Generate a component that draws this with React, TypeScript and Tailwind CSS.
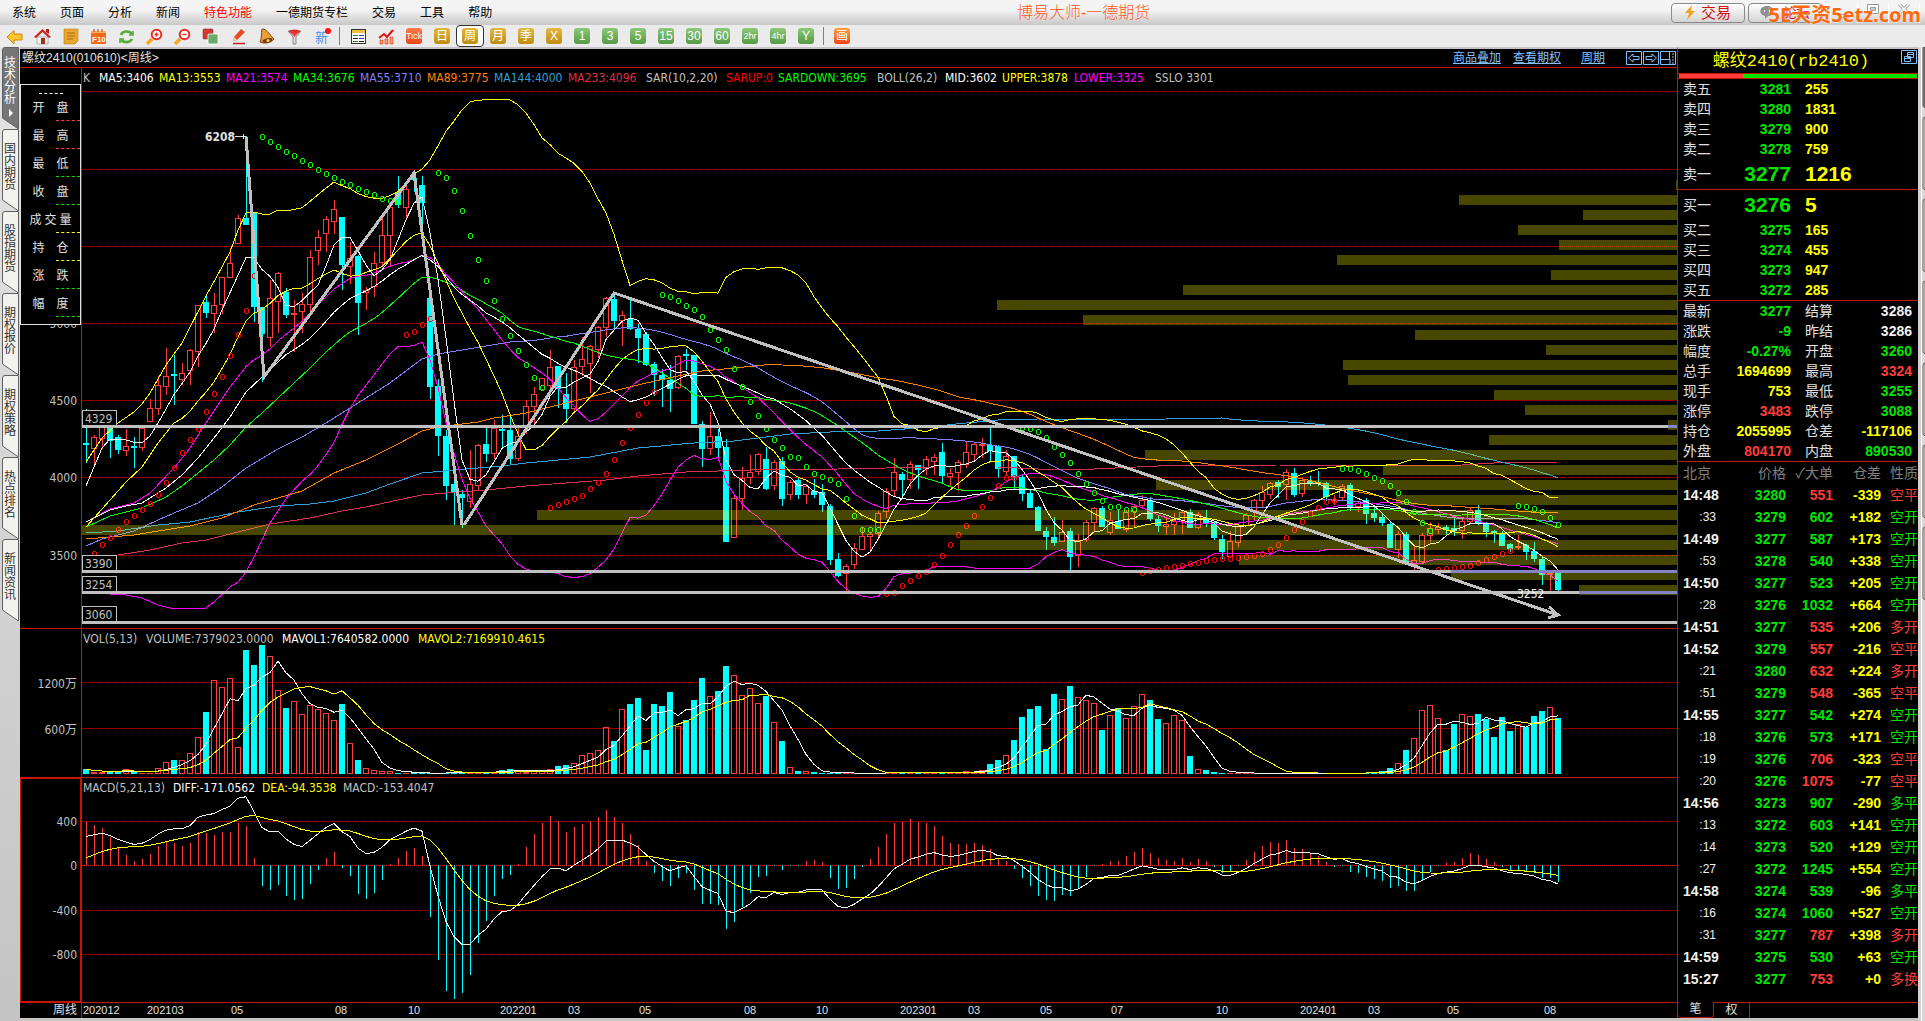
import type { ReactNode } from 'react';
import clsx from 'clsx';

type Pt = [number, number];

// One bar per week: direction (1 = up), high, body top, body bottom, low, volume top.
const BARS: number[][] = [
  [0, 409, 443, 445, 463, 769], [1, 435, 437, 449, 467, 772], [1, 420, 426, 439, 449, 772], [0, 425, 427, 441, 458, 772],
  [0, 435, 437, 450, 454, 771], [1, 429, 446, 451, 456, 769], [0, 437, 446, 448, 468, 772], [1, 425, 428, 448, 451, 773],
  [1, 399, 408, 422, 422, 773], [1, 376, 385, 409, 415, 768], [1, 348, 376, 387, 395, 762], [0, 355, 374, 376, 405, 760],
  [1, 363, 373, 380, 385, 760], [1, 349, 350, 371, 385, 753], [1, 305, 305, 352, 367, 737], [0, 295, 302, 313, 318, 712],
  [1, 293, 305, 314, 333, 680], [1, 277, 277, 305, 314, 687], [1, 248, 263, 278, 278, 678], [1, 215, 218, 244, 244, 747],
  [0, 136, 218, 225, 225, 650], [0, 213, 213, 307, 322, 665], [0, 307, 307, 334, 382, 645], [1, 280, 298, 338, 347, 656],
  [1, 272, 273, 302, 333, 690], [0, 288, 292, 315, 318, 708], [1, 300, 313, 315, 352, 701], [1, 293, 304, 312, 333, 714],
  [1, 250, 257, 305, 313, 705], [1, 230, 237, 251, 265, 709], [1, 216, 219, 234, 252, 713], [1, 200, 209, 222, 234, 720],
  [0, 217, 217, 265, 290, 704], [1, 242, 258, 267, 284, 743], [0, 255, 256, 303, 335, 760], [1, 287, 290, 293, 310, 768],
  [1, 252, 263, 287, 297, 770], [1, 213, 235, 263, 267, 771], [1, 205, 207, 236, 267, 771], [0, 176, 192, 205, 208, 773],
  [1, 182, 189, 208, 220, 773], [0, 170, 178, 180, 192, 773], [0, 176, 185, 203, 235, 773], [0, 298, 298, 387, 399, 773],
  [0, 379, 386, 436, 456, 773], [0, 430, 436, 486, 500, 773], [0, 475, 484, 493, 525, 772], [0, 490, 494, 498, 528, 773],
  [1, 450, 484, 502, 508, 772], [1, 444, 445, 486, 490, 772], [0, 428, 444, 454, 462, 772], [1, 420, 428, 454, 459, 772],
  [0, 415, 429, 431, 447, 770], [0, 414, 430, 459, 465, 769], [1, 427, 436, 459, 461, 771], [1, 400, 406, 427, 434, 772],
  [1, 387, 394, 407, 427, 771], [1, 378, 378, 390, 390, 771], [1, 350, 367, 386, 390, 769], [0, 366, 366, 389, 408, 766],
  [0, 373, 394, 409, 423, 765], [1, 360, 367, 409, 411, 763], [1, 337, 359, 367, 376, 755], [1, 345, 346, 364, 393, 753],
  [1, 326, 327, 350, 358, 750], [1, 297, 298, 328, 337, 727], [0, 294, 299, 321, 328, 741], [1, 311, 315, 321, 346, 709],
  [0, 300, 319, 329, 330, 704], [0, 324, 329, 338, 363, 698], [0, 332, 334, 365, 366, 750], [0, 362, 364, 375, 396, 704],
  [0, 369, 375, 380, 407, 706], [0, 365, 380, 389, 412, 692], [1, 355, 356, 388, 389, 726], [0, 349, 354, 356, 370, 720],
  [0, 355, 355, 424, 424, 700], [0, 421, 424, 449, 467, 678], [1, 412, 436, 449, 455, 696], [0, 429, 436, 448, 460, 691],
  [0, 439, 447, 542, 542, 666], [1, 495, 498, 538, 538, 675], [1, 467, 478, 499, 510, 695], [1, 455, 472, 478, 484, 688],
  [1, 453, 454, 472, 475, 703], [0, 447, 459, 489, 490, 696], [1, 460, 462, 486, 490, 722], [0, 457, 461, 499, 506, 741],
  [1, 480, 482, 495, 500, 767], [0, 477, 480, 495, 499, 771], [1, 484, 486, 495, 504, 771], [0, 479, 491, 495, 498, 772],
  [0, 484, 492, 505, 512, 773], [0, 504, 506, 560, 565, 773], [0, 553, 559, 576, 577, 773], [1, 564, 566, 574, 591, 773],
  [1, 543, 548, 565, 569, 773], [1, 527, 536, 550, 550, 773], [1, 533, 534, 537, 552, 773], [1, 511, 513, 534, 540, 773],
  [1, 488, 491, 512, 518, 773], [1, 458, 472, 491, 496, 772], [0, 472, 474, 480, 496, 773], [1, 461, 464, 480, 489, 773],
  [0, 465, 465, 470, 489, 773], [1, 456, 459, 469, 475, 773], [1, 454, 457, 462, 475, 773], [0, 443, 452, 476, 484, 772],
  [1, 468, 473, 477, 486, 772], [1, 460, 462, 473, 491, 773], [1, 442, 452, 465, 468, 771], [1, 442, 444, 455, 461, 772],
  [1, 438, 444, 446, 458, 770], [0, 427, 445, 451, 462, 764], [0, 445, 446, 469, 478, 760], [1, 450, 456, 472, 475, 755],
  [0, 456, 456, 477, 489, 740], [0, 474, 477, 494, 501, 717], [0, 489, 493, 508, 508, 709], [0, 506, 507, 531, 531, 706],
  [0, 527, 531, 537, 550, 749], [0, 517, 537, 543, 546, 694], [1, 520, 532, 542, 542, 699], [0, 528, 531, 557, 573, 686],
  [1, 534, 540, 556, 567, 697], [1, 520, 522, 540, 542, 700], [1, 507, 508, 523, 532, 703], [0, 506, 508, 527, 527, 730],
  [1, 512, 520, 533, 535, 715], [0, 509, 521, 529, 529, 708], [1, 510, 512, 530, 532, 718], [1, 504, 506, 512, 528, 706],
  [1, 495, 500, 506, 509, 694], [0, 497, 500, 519, 521, 700], [0, 516, 519, 526, 532, 719], [1, 518, 524, 527, 535, 723],
  [1, 513, 521, 525, 535, 715], [1, 510, 512, 522, 534, 720], [0, 509, 512, 528, 528, 756], [1, 512, 514, 528, 529, 769],
  [0, 510, 518, 523, 527, 770], [0, 522, 522, 538, 540, 772], [0, 535, 539, 552, 559, 773], [1, 531, 541, 557, 558, 773],
  [1, 524, 526, 543, 547, 773], [1, 513, 515, 526, 526, 773], [1, 499, 500, 512, 520, 773], [1, 486, 492, 501, 507, 773],
  [1, 482, 483, 495, 499, 773], [0, 480, 482, 487, 498, 773], [1, 469, 472, 485, 500, 773], [0, 468, 473, 495, 497, 773],
  [1, 477, 480, 494, 497, 773], [0, 476, 481, 484, 486, 773], [0, 471, 482, 484, 486, 773], [0, 482, 483, 497, 501, 773],
  [1, 495, 499, 501, 505, 773], [1, 484, 486, 498, 500, 773], [0, 483, 485, 507, 511, 773], [1, 501, 503, 507, 512, 773],
  [0, 498, 500, 514, 524, 773], [0, 507, 513, 518, 522, 772], [0, 514, 517, 523, 526, 771], [0, 521, 524, 548, 548, 768],
  [1, 531, 534, 550, 558, 763], [0, 532, 534, 563, 564, 750], [1, 546, 560, 565, 570, 738], [1, 533, 535, 562, 564, 710],
  [1, 522, 528, 536, 542, 705], [1, 523, 527, 530, 534, 718], [0, 525, 527, 530, 535, 750], [0, 517, 528, 531, 536, 724],
  [1, 519, 521, 531, 539, 714], [1, 507, 510, 522, 524, 716], [0, 505, 510, 523, 525, 714], [0, 522, 523, 532, 537, 719],
  [0, 530, 531, 533, 543, 737], [0, 531, 533, 546, 546, 717], [0, 543, 544, 549, 552, 731], [1, 535, 546, 548, 550, 724],
  [0, 544, 545, 552, 560, 727], [0, 542, 551, 559, 562, 716], [0, 557, 559, 575, 585, 711], [1, 573, 573, 575, 592, 707],
  [0, 570, 573, 590, 594, 718],
];

const LEFT = 82;
const barX = (n: number) => 86 + 8 * n;
const closes = BARS.map((b) => (b[0] ? b[2] : b[3]));
const vols = BARS.map((b) => b[5]);

const lerp = (pts: Pt[], n: number) => {
  const i = pts.findIndex((p) => p[0] >= n);
  if (i < 0) return pts[pts.length - 1][1];
  if (i === 0) return pts[0][1];
  const [a, b] = [pts[i - 1], pts[i]];
  return a[1] + ((b[1] - a[1]) * (n - a[0])) / (b[0] - a[0]);
};

// Moving average; `head` holds the values from before the first full window.
const ma = (src: number[], period: number, head: Pt[] = []): Pt[] =>
  src.map((_, n): Pt => {
    if (n < period - 1 && head.length) return [n, lerp(head, n)];
    const win = src.slice(Math.max(0, n - period + 1), n + 1);
    return [n, win.reduce((s, v) => s + v, 0) / win.length];
  });

const boll = (sign: number, head: Pt[]): Pt[] =>
  closes.map((_, n): Pt => {
    if (n < 25) return [n, lerp(head, n)];
    const win = closes.slice(n - 25, n + 1);
    const mid = win.reduce((s, v) => s + v, 0) / 26;
    const sd = Math.sqrt(win.reduce((s, v) => s + (v - mid) ** 2, 0) / 26);
    return [n, mid + sign * 2 * sd];
  });

const path = (pts: Pt[]) => pts.map(([n, y]) => `${barX(n)},${y.toFixed(1)}`).join(' ');

const HEAD5: Pt[] = [[0, 486], [1, 467], [2, 448], [3, 439]];
const HEAD13: Pt[] = [[0, 527], [3, 500], [5, 482], [7, 467], [9, 443], [11, 423]];
const HEAD21: Pt[] = [[0, 522], [3, 509], [6, 503], [8, 493], [11, 468], [13, 448], [15, 423], [18, 387], [19, 377]];
const HEAD_MID: Pt[] = [[0, 522], [3, 510], [5, 506], [7, 503], [10, 488], [12, 475], [14, 458], [16, 438], [18, 417], [20, 392], [22, 377], [24, 362]];
const HEAD34: Pt[] = [[0, 527], [3, 516], [7, 508], [10, 497], [12, 486], [14, 473], [16, 460], [18, 445], [20, 427], [22, 413], [24, 398], [26, 383], [28, 368], [30, 352], [32, 338]];
const HEAD55: Pt[] = [[0, 546], [2, 539], [6, 531], [9, 520], [11, 513], [14, 503], [17, 487], [20, 468], [24, 449], [27, 437], [30, 423], [34, 403], [38, 383], [42, 359], [44, 354], [47, 350], [50, 346], [53, 342]];
const HEAD89: Pt[] = [[0, 539], [6, 535], [9, 531], [13, 526], [17, 518], [21, 505], [24, 498], [27, 491], [31, 473], [35, 460], [39, 444], [42, 431], [44, 427], [49, 422], [51, 418], [55, 413], [59, 405], [65, 393], [70, 383], [74, 376], [77, 371], [81, 368], [86, 364], [87, 365]];
const HEAD144: Pt[] = [[0, 533], [4, 531], [9, 525], [13, 522], [19, 512], [24, 506], [28, 504], [31, 501], [35, 493], [38, 484], [42, 473], [46, 470], [52, 466], [55, 463], [63, 457], [69, 448], [76, 443], [81, 441], [88, 434], [93, 432], [99, 431], [104, 428], [110, 423], [114, 420], [119, 419], [129, 420], [135, 419], [142, 418]];
const MA233: Pt[] = [[4, 555], [8, 550], [12, 543], [15, 540], [18, 534], [23, 524], [28, 518], [32, 511], [35, 507], [39, 500], [42, 495], [45, 493], [50, 490], [55, 486], [65, 480], [69, 476], [75, 472], [83, 470], [94, 469], [106, 467], [114, 467], [119, 469], [126, 469], [134, 466], [149, 465], [164, 466], [172, 465], [176, 463], [184, 462]];
const HEAD_UP: Pt[] = [[0, 462], [2, 438], [4, 423], [6, 412], [7, 404], [8, 393], [10, 365], [12, 343], [15, 296], [17, 267], [18, 252], [19, 230], [20, 213], [21, 212], [22, 214], [23, 214], [24, 210]];
const HEAD_LOW: Pt[] = [[2, 592], [3, 594], [5, 595], [7, 598], [9, 605], [11, 609], [13, 608], [14, 609], [15, 608], [16, 602], [18, 587], [19, 582], [20, 572], [21, 557], [22, 540], [23, 523], [24, 511]];

const LINES: { color: string; pts: Pt[] }[] = [
  { color: '#dc3050', pts: MA233 },
  { color: '#30a0d8', pts: ma(closes, 144, HEAD144) },
  { color: '#ff8000', pts: ma(closes, 89, HEAD89) },
  { color: '#8080ff', pts: ma(closes, 55, HEAD55) },
  { color: '#00ff00', pts: ma(closes, 34, HEAD34) },
  { color: '#ff00ff', pts: ma(closes, 21, HEAD21) },
  { color: '#ffffff', pts: ma(closes, 26, HEAD_MID) },
  { color: '#ffff00', pts: ma(closes, 13, HEAD13) },
  { color: '#ffff00', pts: boll(-1, HEAD_UP) },
  { color: '#ff00ff', pts: boll(1, HEAD_LOW).slice(2) },
  { color: '#f0f0f0', pts: ma(closes, 5, HEAD5) },
];

// Parabolic SAR runs: first bar, up trend (red) or not (green), rows
const SAR: [number, boolean, number[]][] = [
  [1, true, [553, 544, 537, 529, 521, 515, 509, 503, 494, 482, 467, 452, 439, 428, 411, 393, 376, 355, 334, 310, 275]],
  [22, false, [136, 141, 146, 151, 155, 160, 164, 169, 173, 177, 181, 184, 188, 191, 194, 198, 200, 201]],
  [40, true, [334, 331, 324, 318]],
  [44, false, [172, 177, 190, 210, 235, 259, 280, 300, 318, 335, 350, 364, 377, 387]],
  [58, true, [507, 504, 501, 498, 495, 488, 482, 473, 459, 442, 427, 414, 402, 391]],
  [72, false, [294, 296, 300, 305, 309, 316, 329, 339, 349, 368, 386, 401, 415, 428, 439, 447, 456, 457, 466, 473, 476, 479, 483, 498, 515, 529, 529, 529]],
  [100, true, [593, 592, 585, 580, 575, 571, 564, 555, 544, 534, 525, 515, 506, 497, 485, 477, 477]],
  [117, false, [427, 428, 431, 437, 446, 454, 462, 473, 483, 492, 500, 506, 506, 509, 509]],
  [132, true, [572, 570, 569, 567, 566, 565, 563, 562, 560, 559, 558, 558, 557, 556, 555, 553, 549, 544, 537, 529, 521, 513, 507, 501, 500]],
  [157, false, [468, 468, 470, 473, 477, 480, 485, 492, 501, 511, 522, 530]],
  [169, true, [569, 568, 567, 566, 565, 562, 559, 556, 553, 550]],
  [179, false, [505, 506, 508, 511, 517, 524]],
];

// Left ends of the volume-by-price bars, one per 15px step from y = 180
const PROFILE = [1676, 1459, 1583, 1518, 1559, 1337, 1551, 1183, 997, 1083, 1415, 1546, 1343, 1348, 1494, 1525, 1668, 1489, 1145, 1383, 1156, 1396, 537, 82, 960, 1239, 1451, 1579];

const LEVELS: [string, number][] = [['4329', 425], ['3390', 570], ['3254', 591], ['3060', 621]];

// MACD(5,21,13) on the closes, scaled to the pane's own axis
const ZERO = 865;
const macd = (() => {
  let fast = 460;
  let slow = 500;
  let dea = 7;
  return closes.map((c, n) => {
    if (n > 0) {
      fast += (c - fast) / 3;
      slow += (c - slow) / 11;
    }
    const diff = (slow - fast) * 0.7175;
    if (n > 0) dea += (diff - dea) / 7;
    return { diff, dea, hist: 2 * (diff - dea) };
  });
})();

const DATES: [string, number][] = [
  ['202012', 83], ['202103', 147], ['05', 231], ['08', 335], ['10', 408], ['202201', 500], ['03', 568], ['05', 639], ['08', 744],
  ['10', 816], ['202301', 900], ['03', 968], ['05', 1040], ['07', 1111], ['10', 1216], ['202401', 1300], ['03', 1368], ['05', 1447], ['08', 1544],
];

const tone = {
  g: 'text-[#00e600]',
  r: 'text-[#ff3c3c]',
  y: 'text-[#ffff00]',
  w: 'text-[#f0f0f0]',
};
type Tone = keyof typeof tone;

function Grid({ rows }: { rows: number[] }) {
  return (
    <g stroke="#a00000" strokeDasharray="1 1">
      {rows.map((y) => <line key={y} x1={LEFT} x2={4000} y1={y + 0.5} y2={y + 0.5} />)}
    </g>
  );
}

function Axis({ top, labels }: { top: number; labels: [string, number][] }) {
  return (
    <div className="w-[62px] shrink-0 border-r border-[#c81400]">
      <svg className="block h-full w-full" fill="#c0c0c0" fontSize="12" textAnchor="end">
        {labels.map(([t, y]) => <text key={t} x="57" y={y - top + 5}>{t}</text>)}
      </svg>
    </div>
  );
}

function PriceChart() {
  return (
    <svg className="block min-h-0 w-full flex-1" role="img" aria-label="K线图">
      <g transform="translate(-82 -88)" fill="none" shapeRendering="crispEdges">
        <Grid rows={[91, 169, 246, 323, 400, 477, 555]} />
        {BARS.map(([up, hi, t, b, lo], n) => {
          const x = barX(n);
          const color = up ? '#ff3c3c' : '#00ffff';
          return (
            <g key={n}>
              {hi < t && <rect x={x} y={hi} width="1" height={t - hi} fill={color} />}
              {lo > b && <rect x={x} y={b} width="1" height={lo - b} fill={color} />}
              {up && b - t > 2
                ? <rect x={x - 2.5} y={t + 0.5} width="5" height={b - t - 1} stroke={color} />
                : <rect x={x - 3} y={t} width="6" height={b - t} fill={color} />}
            </g>
          );
        })}
        {LINES.map((l, i) => <polyline key={i} points={path(l.pts)} stroke={l.color} />)}
        {SAR.map(([start, up, ys]) => ys.map((y, i) => (
          <path
            key={start + i}
            d={`M${barX(start + i) - 1} ${y - 1.5}h3m.5 .5v4m-.5 .5h-3m-.5 -.5v-4`}
            stroke={up ? '#ff0000' : '#00ff00'}
          />
        )))}
        <g fill="#ffff00" fillOpacity="0.28">
          {PROFILE.map((x, i) => <rect key={i} x={x} y={180 + i * 15} width="3000" height="10" />)}
        </g>
        {LEVELS.map(([label, y]) => (
          <g key={label}>
            <rect x="82" y={y} width="3000" height="3" fill="#c0c0c0" />
            <rect x="82.5" y={y - 14.5} width="34" height="15" fill="#000" stroke="#c0c0c0" />
            <text x="85" y={y - 2} fontSize="12" fill="#c0c0c0">{label}</text>
          </g>
        ))}
        <g fill="#8484c4">
          <rect x="1668" y="425" width="2000" height="3" />
          <rect x="1451" y="570" width="2000" height="3" />
          <rect x="1579" y="591" width="2000" height="3" />
        </g>
        <g stroke="#c0c0c0" strokeWidth="3">
          <polyline points="246,137 264,377 414,173 462,525" />
          <polyline points="464,525 614,293 1558,615" />
          <polyline points="1549,607 1558,615 1548,618" />
        </g>
        <path d="M235 136.500H246M243 134v5" stroke="#e0e0e0" />
        <text x="205" y="141" fontSize="12" fontWeight="bold" fill="#e0e0e0">6208</text>
        <text x="1517" y="598" fontSize="12" fill="#f0f0f0">3252</text>
      </g>
    </svg>
  );
}

function VolumeChart() {
  return (
    <svg className="block min-h-0 w-full flex-1" role="img" aria-label="成交量">
      <g transform="translate(-82 -645)" fill="none" shapeRendering="crispEdges">
        <Grid rows={[682, 728]} />
        {BARS.map((b, n) => (b[0] && b[5] < 772
          ? <rect key={n} x={barX(n) - 2.5} y={b[5] + 0.5} width="5" height={773 - b[5]} stroke="#ff3c3c" />
          : <rect key={n} x={barX(n) - 3} y={b[5]} width="6" height={774 - b[5]} fill={b[0] ? '#ff3c3c' : '#00ffff'} />))}
        <polyline points={path(ma(vols, 5))} stroke="#f0f0f0" />
        <polyline points={path(ma(vols, 13))} stroke="#ffff00" />
      </g>
    </svg>
  );
}

function MacdChart() {
  return (
    <svg className="block min-h-0 w-full flex-1" role="img" aria-label="MACD">
      <g transform="translate(-82 -794)" fill="none" shapeRendering="crispEdges">
        <Grid rows={[821, 910, 954]} />
        <line x1={LEFT} x2="4000" y1="865.5" y2="865.5" stroke="#e02020" strokeDasharray="1 1" />
        {macd.map((m, n) => {
          const h = Math.max(1, Math.round(Math.abs(m.hist)));
          return <rect key={n} x={barX(n)} y={m.hist > 0 ? ZERO - h : ZERO} width="1" height={h} fill={m.hist > 0 ? '#ff3c3c' : '#00ffff'} />;
        })}
        <polyline points={path(macd.map((m, n): Pt => [n, ZERO - m.diff]))} stroke="#f0f0f0" />
        <polyline points={path(macd.map((m, n): Pt => [n, ZERO - m.dea]))} stroke="#ffff00" />
      </g>
    </svg>
  );
}

const icons: [string, ReactNode][] = [
  ['后退', <path d="M1 9 8 2.500V6h8v6H8v4z" fill="#fdc52c" stroke="#c98a10" />],
  ['主页', <g><path d="M3 9h11v7H3z" fill="#f4f4f4" stroke="#888" strokeWidth=".6" /><path d="M0 9 8.500 1 17 9l-2 1-6.500-6L2 10z" fill="#d32020" /><path d="M12 1h3v5l-3-2z" fill="#b02020" /><path d="M7 10h4v6H7z" fill="#a03018" /></g>],
  ['公告', <g><path d="M2 1h14v12l-3 3H2z" fill="#e8a72e" stroke="#c07c10" strokeWidth=".6" /><path d="M5 5h8M5 8h8M5 11h6" stroke="#a86b10" /></g>],
  ['F10', <g><rect x="1" y="3" width="15" height="13" rx="1" fill="#f26a1b" /><path d="M1 3h15v2H1z" fill="#ffb060" /><path d="M4 1v3M8 1v3M12 1v3" stroke="#a04010" /><text x="2" y="13.500" fontSize="8" fontWeight="bold" fill="#fff3e0">F10</text></g>],
  ['刷新', <g fill="none" stroke="#55a83c" strokeWidth="2.600"><path d="M3 7c1-4 8-5 11-1M14 11c-2 4-8 4-11 1" /><path d="M15 3v4h-4M2 15v-4h4" strokeWidth="1.600" /></g>],
  ['放大', <g><path d="m1 16 5-5" stroke="#f5a623" strokeWidth="3.500" /><circle cx="10.500" cy="6.500" r="4.800" fill="#fff" stroke="#ee2c20" strokeWidth="2" /><path d="M8.500 6.500h4M10.500 4.500v4" stroke="#ee2c20" strokeWidth="1.500" /></g>],
  ['缩小', <g><path d="m1 16 5-5" stroke="#f5a623" strokeWidth="3.500" /><circle cx="10.500" cy="6.500" r="4.800" fill="#fff" stroke="#ee2c20" strokeWidth="2" /><path d="M8.500 6.500h4" stroke="#ee2c20" strokeWidth="1.500" /></g>],
  ['叠加', <g><rect x="1" y="1" width="10" height="10" rx="1" fill="#d03a34" stroke="#8a1c18" strokeWidth=".5" /><rect x="6" y="6" width="10" height="10" rx="1" fill="#67ad6a" stroke="#fff" strokeWidth=".8" /></g>],
  ['画线', <g><path d="M3 15.500h12" stroke="#c02020" strokeWidth="1.500" /><path d="m3 13 1-4 7-8 4 3-8 8z" fill="#ea4a28" /><path d="m3 13 1-4 3 3z" fill="#f6d7a0" /></g>],
  ['预警', <g><path d="M4 1c5 0 6 4 12 10-3 4-9 5-14 3 2-4 1-8 2-13z" fill="#e9a13b" stroke="#7a4410" /><ellipse cx="9.500" cy="12.500" rx="5" ry="2.200" fill="#7a3a10" transform="rotate(-14 9.500 12.500)" /><circle cx="10" cy="12.500" r="1.500" fill="#ffd870" /></g>],
  ['过滤', <g><path d="M2 3h13l-5 6v7H7V9z" fill="#d8d8d8" stroke="#777" strokeWidth=".8" /><ellipse cx="8.500" cy="3.500" rx="5.500" ry="2" fill="#e23030" /><path d="M5 5h7L8.500 9z" fill="#f04040" /></g>],
  ['新', <g><text x="1" y="14" fontSize="13" fill="#4a90e2">新</text><circle cx="14" cy="3" r="3" fill="#ff1010" /></g>],
  ['报价', <g><rect x="1.500" y="1.500" width="14" height="14" fill="#fff" stroke="#333" /><path d="M2 2h13v3H2z" fill="#f0c040" /><path d="M3 7.500h5M3 13.500h5" stroke="#208020" /><path d="M3 10.500h5M9 13.500h5" stroke="#202020" /><path d="M9 7.500h5M9 10.500h5" stroke="#2040d0" /></g>],
  ['走势', <g><path d="M2 16v-4h3v4zM7 16v-5h3v5zM12 16V9h3v7z" fill="#f5a060" stroke="#d01010" strokeWidth=".5" /><path d="m1 10 5-4 3 3 6-7" fill="none" stroke="#e01010" strokeWidth="2" /></g>],
];

const GOLD = 'from-[#e0b840] to-[#c08c10]';
const GREEN = 'from-[#8cc878] to-[#559a45]';
const ORANGE = 'from-[#ff7a4a] to-[#e84418]';
const periods: [string, string][] = [
  ['Tick', ORANGE], ['日', GOLD], ['周', GOLD], ['月', GOLD], ['季', GOLD], ['X', GOLD], ['1', GREEN], ['3', GREEN], ['5', GREEN],
  ['15', GREEN], ['30', GREEN], ['60', GREEN], ['2hr', GREEN], ['4hr', GREEN], ['Y', GREEN],
];

function IconButton({ name, children }: { name: string; children: ReactNode }) {
  return (
    <button type="button" aria-label={name} className="flex w-7 items-center justify-center">
      <svg width="17" height="17" viewBox="0 0 17 17">{children}</svg>
    </button>
  );
}

function PeriodButton({ label, color, active }: { label: string; color: string; active?: boolean }) {
  return (
    <button type="button" className={clsx('flex h-[22px] w-7 items-center justify-center rounded', active && 'border border-[#333] bg-white')}>
      <span className={clsx('flex h-4 w-4 items-center justify-center rounded-[3px] bg-linear-to-b leading-none text-white', color, label.length > 2 ? 'text-[9px]' : 'text-[12px]')}>{label}</span>
    </button>
  );
}

function Header() {
  const menu = ['系统', '页面', '分析', '新闻', '特色功能', '一德期货专栏', '交易', '工具', '帮助'];
  return (
    <header className="relative shrink-0">
      <div className="flex h-[25px] items-center justify-between bg-linear-to-b from-[#f4f4f4] from-40% to-[#c8c8c8] pr-[5px]">
        <nav className="flex">
          {menu.map((m) => (
            <button key={m} type="button" className={clsx('px-3 text-[12px] leading-4', m === '特色功能' ? 'text-[#ff0000]' : 'text-black')}>{m}</button>
          ))}
        </nav>
        <div className="flex gap-[3px]">
          <button type="button" className="flex h-5 w-[74px] items-center justify-center gap-1.5 rounded border border-[#888] bg-linear-to-b from-white to-[#d4d4d4] text-[15px] leading-none text-[#d01010]">
            <svg width="10" height="15" viewBox="0 0 10 15"><path d="M7 0 0 8h4l-2 7 8-9H6z" fill="#f5a020" /></svg>
            交易
          </button>
          <button type="button" className="mr-[5px] flex h-5 w-[74px] items-center justify-center gap-2 rounded border border-[#888] bg-linear-to-b from-white to-[#d4d4d4] text-[13px] leading-none text-[#d01030]">
            <svg width="15" height="13" viewBox="0 0 15 13"><path d="M7 0c9 0 9 10 1 10l-3 3v-3C-2 9-1 0 7 0z" fill="#909090" /><path d="M4 4h1v2H4zM9 4h1v2H9z" fill="#fff" /></svg>
            论坛
          </button>
          <button type="button" aria-label="最小化" className="flex h-5 w-7 items-center justify-center border-x border-white">
            <svg width="10" height="10" viewBox="0 0 10 10"><rect x=".5" y="6.500" width="9" height="3" fill="#fff" stroke="#999" /></svg>
          </button>
          <button type="button" aria-label="还原" className="flex h-5 w-6 justify-center pt-px">
            <svg width="12" height="10" viewBox="0 0 12 10" fill="#fff" stroke="#999"><path d="M.5.5h11v9H.5z" /><path d="M3.500 3.500h5v3h-5z" fill="#ccc" /></svg>
          </button>
          <button type="button" aria-label="关闭" className="flex h-5 w-8 justify-center border-x border-white pt-px">
            <svg width="12" height="10" viewBox="0 0 12 10"><path d="m1 0 10 10M11 0 1 10" stroke="#999" strokeWidth="3" /><path d="m1 0 10 10M11 0 1 10" stroke="#fff" strokeWidth="1.500" /></svg>
          </button>
        </div>
      </div>
      <h1 className="absolute top-px left-[1017px] text-[16px] leading-6 font-light text-[#ff5a1e]">博易大师-一德期货</h1>
      <div className="absolute top-[3px] right-[4px] font-['Noto_Sans','Noto_Sans_CJK_SC',sans-serif] text-[20px] leading-6 font-bold text-[#ff6a10] [text-shadow:0_0_2px_#fff]">5E天资5etz.com</div>
      <div className="flex h-[22px] items-center bg-[#ebebeb]">
        {icons.slice(0, 12).map(([name, art]) => <IconButton key={name} name={name}>{art}</IconButton>)}
        <span className="mr-1 ml-[3px] h-[18px] w-px bg-[#808080]" />
        {icons.slice(12).map(([name, art]) => <IconButton key={name} name={name}>{art}</IconButton>)}
        {periods.map(([label, color]) => <PeriodButton key={label} label={label} color={color} active={label === '周'} />)}
        <span className="mr-1 ml-[3px] h-[18px] w-px bg-[#808080]" />
        <PeriodButton label="画" color="from-[#ffa040] to-[#f04010]" />
      </div>
    </header>
  );
}

function SideTabs() {
  const tabs = ['技术分析', '国内期货', '股指期货', '期权报价', '期权策略', '热点排名', '新闻资讯'];
  return (
    <nav className="w-5 shrink-0 bg-linear-to-b from-[#e4e4e4] to-[#c4c4c4]">
      {tabs.map((t, i) => (
        <button key={t} type="button" className={clsx('relative flex h-[82px] w-5 justify-center text-[12px]', i ? 'pt-[14px] text-[#333]' : 'pt-[10px] text-white')}>
          <svg className="absolute inset-0" width="20" height="82">
            <path d="M18.500.5H5Q2.500.5 2.500 3v68l16 11z" fill={i ? '#f2f2ee' : '#767676'} stroke="#606060" />
            {i === 0 && <path d="M9 62v8l4-4z" fill="#fff" />}
          </svg>
          <span className="relative w-3 leading-3 break-all">{t}</span>
        </button>
      ))}
    </nav>
  );
}

function DataWindow() {
  const rows: [string, string][] = [
    ['开盘', 'border-[#ff3c3c]'], ['最高', 'border-[#ff3c3c]'], ['最低', 'border-[#00e600]'], ['收盘', 'border-[#00e600]'],
    ['成交量', 'border-[#ffff00]'], ['持仓', 'border-[#ffff00]'], ['涨跌', 'border-[#00e600]'], ['幅度', 'border-[#00e600]'],
  ];
  return (
    <div className="absolute top-4 left-0 w-[61px] border border-[#e0e0e0] bg-black pb-1.5 text-[12px] text-[#e0e0e0]">
      <div className="mx-auto mt-2 w-6 border-t border-dashed border-white" />
      {rows.map(([label, color]) => (
        <div key={label} className="h-7 pt-1.5">
          <div className={clsx('mx-auto flex justify-between leading-4', label.length > 2 ? 'w-[42px]' : 'w-9')}>
            {label.split('').map((c) => <span key={c}>{c}</span>)}
          </div>
          <div className={clsx('mt-1 ml-auto w-6 border-t border-dashed', color)} />
        </div>
      ))}
    </div>
  );
}

const LEGEND: [string, string][] = [
  ['K', 'w-4 text-[#c0c0c0]'],
  ['MA5:3406', 'w-[60px] text-white'],
  ['MA13:3553', 'w-[67px] text-[#ffff00]'],
  ['MA21:3574', 'w-[67px] text-[#ff00ff]'],
  ['MA34:3676', 'w-[67px] text-[#00ff00]'],
  ['MA55:3710', 'w-[67px] text-[#8080ff]'],
  ['MA89:3775', 'w-[67px] text-[#ff8000]'],
  ['MA144:4000', 'w-[74px] text-[#30a0d8]'],
  ['MA233:4096', 'w-[78px] text-[#dc3050]'],
  ['SAR(10,2,20)', 'w-[80px] text-[#c0c0c0]'],
  ['SARUP:0', 'w-[52px] text-[#ff0000]'],
  ['SARDOWN:3695', 'w-[99px] text-[#00ff00]'],
  ['BOLL(26,2)', 'w-[68px] text-[#c0c0c0]'],
  ['MID:3602', 'w-[57px] text-white'],
  ['UPPER:3878', 'w-[72px] text-[#ffff00]'],
  ['LOWER:3325', 'w-[81px] text-[#ff00ff]'],
  ['SSLO 3301', 'text-[#c0c0c0]'],
];

function Charts() {
  return (
    <main className="flex min-w-0 flex-1 flex-col border-t-2 border-[#c8c0c8] bg-black font-['DejaVu_Sans_Condensed','Noto_Sans_CJK_SC',sans-serif] text-[12px]">
      <div className="flex h-[19px] shrink-0 items-center border-b border-[#c81400] font-['Liberation_Sans','Noto_Sans_CJK_SC',sans-serif]">
        <span className="pl-[2px] leading-4 text-[#e0e0e0]">螺纹2410(010610)&lt;周线&gt;</span>
        <div className="ml-auto flex items-center text-[#80c0ff]">
          <a href="#overlay" className="mr-3 leading-4 underline">商品叠加</a>
          <a href="#options" className="mr-5 leading-4 underline">查看期权</a>
          <a href="#period" className="mr-[21px] leading-4 underline">周期</a>
          <svg width="51" height="14" viewBox="0 0 51 14" fill="none" stroke="#80c0ff">
            <path d="M.5.5h15v13H.5zM17.500.5h15v13h-15zM34.500.5h15v13h-15z" />
            <path d="M2.500 7 7 3v2.500h6v3H7V11zM30.500 7 26 3v2.500h-6v3h6V11zM35 8.500h9v5M43.500 1v8" />
            <path d="M47 2v11" strokeDasharray="2 1" />
          </svg>
        </div>
      </div>

      <section className="relative flex min-h-[560px] flex-1 border-b border-[#c81400]">
        <Axis top={68} labels={[['5000', 323], ['4500', 400], ['4000', 477], ['3500', 555]]} />
        <div className="flex min-w-0 flex-1 flex-col">
          <div className="flex h-5 shrink-0 items-center pl-px whitespace-nowrap">
            {LEGEND.map(([t, c]) => <span key={t} className={clsx('shrink-0', c)}>{t}</span>)}
          </div>
          <PriceChart />
        </div>
        <DataWindow />
      </section>

      <section className="flex h-[149px] shrink-0 border-b border-[#c81400]">
        <Axis top={629} labels={[['1200万', 683], ['600万', 729]]} />
        <div className="flex min-w-0 flex-1 flex-col">
          <div className="flex h-4 shrink-0 items-center pt-1 pl-px leading-4 whitespace-nowrap text-[#c0c0c0]">
            <span className="w-[63px]">VOL(5,13)</span>
            <span className="w-[136px]">VOLUME:7379023.0000</span>
            <span className="w-[136px] text-white">MAVOL1:7640582.0000</span>
            <span className="text-[#ffff00]">MAVOL2:7169910.4615</span>
          </div>
          <VolumeChart />
        </div>
      </section>

      <section className="relative flex h-[225px] shrink-0 border-b border-[#c81400]">
        <Axis top={778} labels={[['400', 821], ['0', 865], ['-400', 910], ['-800', 954]]} />
        <div className="absolute inset-y-0 left-0 w-[62px] border border-r-2 border-[#c81400]" />
        <div className="flex min-w-0 flex-1 flex-col">
          <div className="flex h-4 shrink-0 items-center pt-1 pl-px leading-4 whitespace-nowrap text-[#c0c0c0]">
            <span className="w-[90px]">MACD(5,21,13)</span>
            <span className="w-[89px] text-white">DIFF:-171.0562</span>
            <span className="w-[81px] text-[#ffff00]">DEA:-94.3538</span>
            <span>MACD:-153.4047</span>
          </div>
          <MacdChart />
        </div>
      </section>

      <div className="flex h-[15px] shrink-0 font-['Liberation_Sans','Noto_Sans_CJK_SC',sans-serif] text-[#e0e0e0]">
        <div className="w-[62px] border-r border-[#c81400] pr-1 text-right leading-[15px]">周线</div>
        <svg className="h-full min-w-0 flex-1" fill="#e0e0e0" fontSize="11">
          {DATES.map(([t, x]) => <text key={x} x={x - LEFT} y="11">{t}</text>)}
        </svg>
      </div>
    </main>
  );
}

const asks: [string, string, string][] = [['卖五', '3281', '255'], ['卖四', '3280', '1831'], ['卖三', '3279', '900'], ['卖二', '3278', '759'], ['卖一', '3277', '1216']];
const bids: [string, string, string][] = [['买一', '3276', '5'], ['买二', '3275', '165'], ['买三', '3274', '455'], ['买四', '3273', '947'], ['买五', '3272', '285']];

const stats: [string, string, Tone, string, string, Tone][] = [
  ['最新', '3277', 'g', '结算', '3286', 'w'],
  ['涨跌', '-9', 'g', '昨结', '3286', 'w'],
  ['幅度', '-0.27%', 'g', '开盘', '3260', 'g'],
  ['总手', '1694699', 'y', '最高', '3324', 'r'],
  ['现手', '753', 'y', '最低', '3255', 'g'],
  ['涨停', '3483', 'r', '跌停', '3088', 'g'],
  ['持仓', '2055995', 'y', '仓差', '-117106', 'y'],
  ['外盘', '804170', 'r', '内盘', '890530', 'g'],
];

const ticks: [string, string, string, string, string, Tone][] = [
  ['14:48', '3280', '551', '-339', '空平', 'r'],
  [':33', '3279', '602', '+182', '空开', 'g'],
  ['14:49', '3277', '587', '+173', '空开', 'g'],
  [':53', '3278', '540', '+338', '空开', 'g'],
  ['14:50', '3277', '523', '+205', '空开', 'g'],
  [':28', '3276', '1032', '+664', '空开', 'g'],
  ['14:51', '3277', '535', '+206', '多开', 'r'],
  ['14:52', '3279', '557', '-216', '空平', 'r'],
  [':21', '3280', '632', '+224', '多开', 'r'],
  [':51', '3279', '548', '-365', '空平', 'r'],
  ['14:55', '3277', '542', '+274', '空开', 'g'],
  [':18', '3276', '573', '+171', '空开', 'g'],
  [':19', '3276', '706', '-323', '空平', 'r'],
  [':20', '3276', '1075', '-77', '空平', 'r'],
  ['14:56', '3273', '907', '-290', '多平', 'g'],
  [':13', '3272', '603', '+141', '空开', 'g'],
  [':14', '3273', '520', '+129', '空开', 'g'],
  [':27', '3272', '1245', '+554', '空开', 'g'],
  ['14:58', '3274', '539', '-96', '多平', 'g'],
  [':16', '3274', '1060', '+527', '空开', 'g'],
  [':31', '3277', '787', '+398', '多开', 'r'],
  ['14:59', '3275', '530', '+63', '空开', 'g'],
  ['15:27', '3277', '753', '+0', '多换', 'r'],
];

function BookTable({ rows }: { rows: [string, string, string][] }) {
  return (
    <table className="w-full table-fixed">
      <tbody>
        {rows.map(([label, price, vol]) => {
          const best = label.endsWith('一');
          return (
            <tr key={label} className={clsx('font-bold', best ? 'h-[30px] text-[21px]' : 'h-5 text-[14px]')}>
              <th className="w-[45px] pl-[5px] text-left text-[14px] font-normal text-[#e0e0e0]">{label}</th>
              <td className="w-[68px] text-right text-[#00e600]">{price}</td>
              <td className="pl-[14px] text-[#ffff00]">{vol}</td>
            </tr>
          );
        })}
      </tbody>
    </table>
  );
}

function QuotePanel() {
  return (
    <aside className="flex w-[241px] shrink-0 flex-col border-t-2 border-l border-t-[#c8c0c8] border-l-[#c81400] bg-black text-[14px] leading-5 whitespace-nowrap">
      <div className="relative h-[24px] text-center font-['Liberation_Mono','Noto_Sans_CJK_SC',monospace] text-[17px] leading-[26px] text-[#ffff00]">
        <span className="pr-3.5">螺纹2410(rb2410)</span>
        <button type="button" aria-label="弹出窗口" className="absolute top-px right-px">
          <svg width="16" height="14" viewBox="0 0 16 14" fill="none" stroke="#80c0ff"><path d="M.5.5h15v13H.5zM6.500 2.500h6v5h-6zM3.500 6.500h6v5h-6zM6 4.500h7M3 8.500h7" /></svg>
        </button>
      </div>
      <div className="flex h-[6px] border-y border-[#c81400] px-px">
        <div className="w-[27%] bg-[#ff3c3c]" />
        <div className="flex-1 bg-[#00e600]" />
      </div>
      <div className="h-[111px] border-b border-[#c81400]"><BookTable rows={asks} /></div>
      <div className="h-[111px] border-b border-[#c81400]"><BookTable rows={bids} /></div>
      <table className="w-full table-fixed border-b border-[#c81400]">
        <tbody>
          {stats.map(([a, av, at, b, bv, bt]) => (
            <tr key={a} className="h-5">
              <th className="w-[45px] pl-[5px] text-left font-normal text-[#e0e0e0]">{a}</th>
              <td className={clsx('w-[68px] text-right font-bold', tone[at])}>{av}</td>
              <th className="w-[47px] pl-[14px] text-left font-normal text-[#e0e0e0]">{b}</th>
              <td className={clsx('pr-1.5 text-right font-bold', tone[bt])}>{bv}</td>
            </tr>
          ))}
        </tbody>
      </table>
      <table className="w-full table-fixed text-right">
        <thead>
          <tr className="h-[22px] text-[#808080]">
            <th className="w-[50px] pl-[5px] text-left font-normal">北京</th>
            <th className="w-[58px] font-normal">价格</th>
            <th className="w-[47px] font-normal">✓大单</th>
            <th className="w-[48px] font-normal">仓差</th>
            <th className="pl-[9px] text-left font-normal">性质</th>
          </tr>
        </thead>
        <tbody className="font-bold">
          {ticks.map(([time, price, size, delta, kind, t], i) => (
            <tr key={i} className="h-[22px]">
              <td className={clsx('text-[#f0f0f0]', time.length > 3 ? 'pl-[5px] text-left' : 'pr-3 text-[12px] font-normal')}>{time}</td>
              <td className="text-[#00e600]">{price}</td>
              <td className={tone[t]}>{size}</td>
              <td className="text-[#ffff00]">{delta}</td>
              <td className={clsx('pl-[9px] text-left font-normal', tone[t])}>{kind}</td>
            </tr>
          ))}
        </tbody>
      </table>
      <div className="mt-auto flex h-4 text-[12px] leading-[15px] text-[#e0e0e0]">
        <button type="button" className="w-9 rounded-b border-r border-b border-[#c81400]">笔</button>
        <button type="button" className="w-9 border-t border-r border-[#c81400]">权</button>
        <div className="flex-1 border-t border-[#c81400]" />
      </div>
    </aside>
  );
}

// Sliver of the neighbouring window along the right edge
function EdgeStrip() {
  return (
    <div className="flex w-[7px] shrink-0 justify-end border-l-[3px] border-[#d8d0d0] bg-white">
      <svg className="h-full w-[3px] bg-[#d8d8d8]" aria-hidden="true">
        {[-12, 70, 152, 234, 316, 398, 480].map((y, i) => (
          <path key={y} d={`M3 ${y}Q1 ${y} 1 ${y + 3}v68l2 2z`} fill={i ? '#f2f2ee' : '#767676'} stroke="#606060" />
        ))}
      </svg>
    </div>
  );
}

export default function App() {
  return (
    <div className="flex h-screen flex-col overflow-hidden bg-[#d0d0d0] font-['Liberation_Sans','Noto_Sans_CJK_SC',sans-serif]">
      <Header />
      <div className="flex min-h-0 flex-1">
        <SideTabs />
        <div className="flex min-w-0 flex-1 border-b-[3px] border-[#c8c4c0]">
          <Charts />
          <QuotePanel />
        </div>
        <EdgeStrip />
      </div>
    </div>
  );
}
